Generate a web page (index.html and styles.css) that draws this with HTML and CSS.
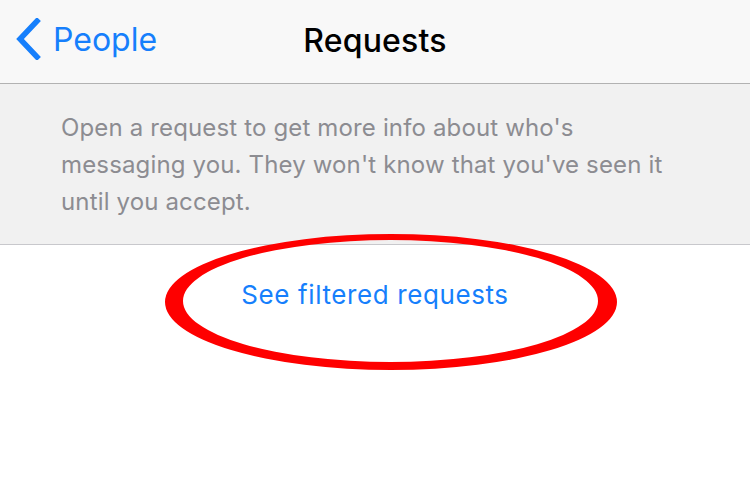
FILE: index.html
```html
<!DOCTYPE html>
<html lang="en">

<head>
    <meta charset="utf-8">
    <meta name="viewport" content="width=device-width, initial-scale=1.0">
    <title>Requests</title>
    <link rel="stylesheet" href="styles.css">
</head>

<body>
    <header class="navbar">
        <a class="back" href="#">
            <svg class="chevron" width="26" height="42" viewBox="0 0 26 42">
                <path d="M22 3 L5 21 L22 39" fill="none" stroke="#167ffc" stroke-width="5.5" stroke-linecap="square"/>
            </svg>
            <span>People</span>
        </a>
        <h1>Requests</h1>
    </header>

    <section class="info">
        <p>Open a request to get more info about who's<br>messaging you. They won't know that you've seen it<br>until you accept.</p>
    </section>

    <main class="filtered">
        <a href="#">See filtered requests</a>
        <svg class="circle" width="750" height="500" viewBox="0 0 750 500">
            <path fill="#fe0000" fill-rule="evenodd"
                d="M165 302 A226 68 0 1 0 617 302 A226 68 0 1 0 165 302 Z
                   M183 301 A207.5 61 0 1 0 598 301 A207.5 61 0 1 0 183 301 Z"/>
        </svg>
    </main>
</body>

</html>
```

FILE: styles.css
```css
body {
    margin: 0;
    background-color: white;
    font-family: 'Inter', 'Roboto', sans-serif;
    position: relative;
    height: 500px;
    overflow: hidden;
}

.navbar {
    height: 84px;
    box-sizing: border-box;
    padding-bottom: 2px;
    background-color: #f8f8f8;
    border-bottom: 1px solid #b2b2b2;
    display: flex;
    align-items: center;
    justify-content: center;
    position: relative;
}

.navbar h1 {
    margin: 0;
    font-size: 32px;
    font-weight: 500;
    color: black;
    letter-spacing: .2px;
}

.back {
    position: absolute;
    left: 15px;
    top: 18px;
    display: flex;
    align-items: center;
    gap: 12px;
    color: #167ffc;
    text-decoration: none;
    font-size: 32px;
}

.chevron {
    display: block;
}

.info {
    height: 161px;
    background-color: #f1f1f1;
    border-bottom: 1px solid #c8c8cc;
    box-sizing: border-box;
    padding: 25px 30px 0 61px;
}

.info p {
    margin: 0;
    color: #8c8c91;
    font-size: 24px;
    letter-spacing: .15px;
    line-height: 37px;
}

.filtered {
    display: flex;
    justify-content: center;
    padding-top: 34px;
}

.filtered a {
    color: #167ffc;
    text-decoration: none;
    font-size: 26px;
    letter-spacing: .6px;
}

.circle {
    position: absolute;
    top: 0;
    left: 0;
    pointer-events: none;
}
```
